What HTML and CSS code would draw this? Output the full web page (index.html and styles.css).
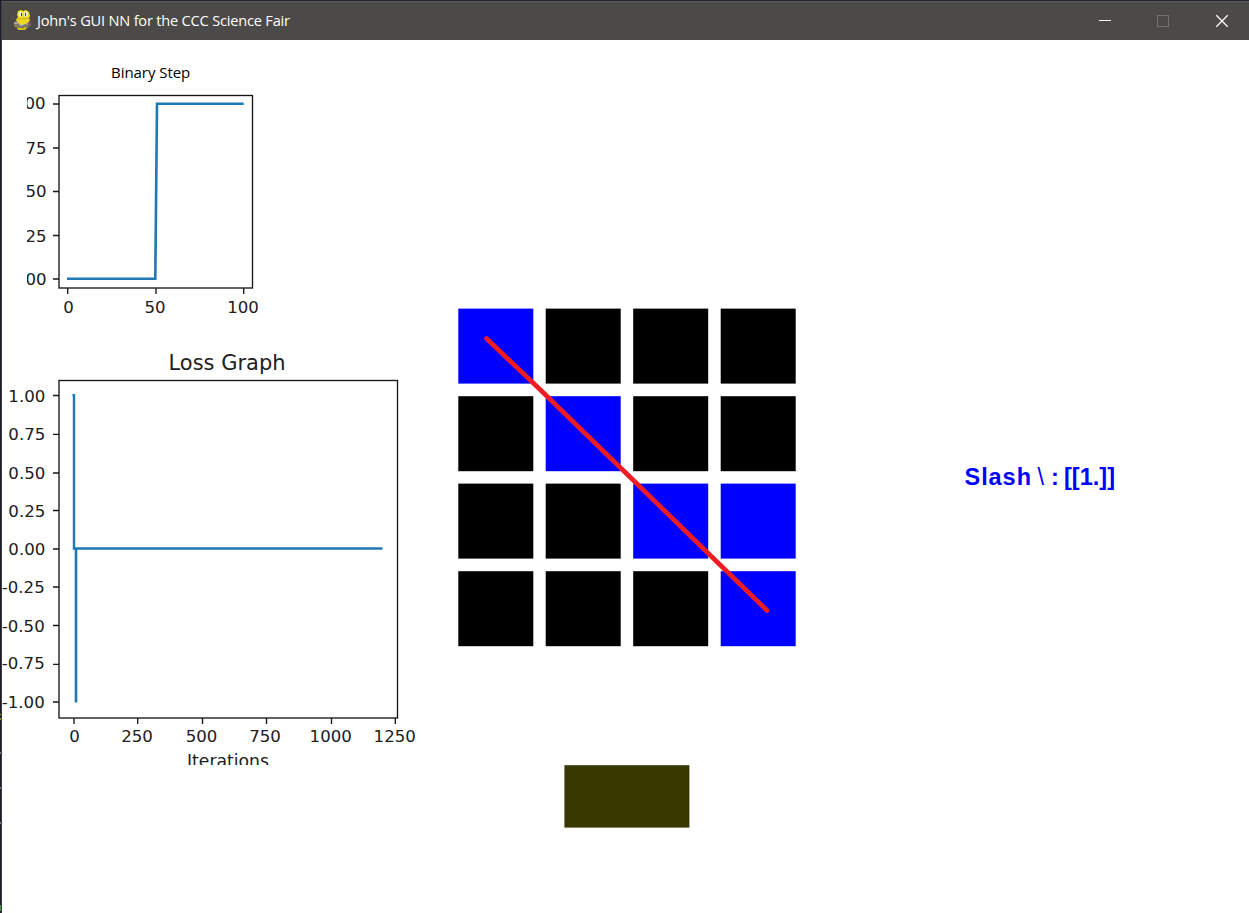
FILE: index.html
```html
<!DOCTYPE html>
<html lang="en">
<head>
<meta charset="utf-8">
<title>John's GUI NN for the CCC Science Fair</title>
<link rel="stylesheet" href="styles.css">
</head>
<body>
<div class="desktop">
  <svg class="edge" width="2" height="913" shape-rendering="crispEdges">
    <rect width="2" height="913" fill="#1e1e2a"/><rect x="1" y="1" width="1" height="912" fill="#3c3b42"/>
    <g><rect y="714" width="1" height="1" fill="#80a526"/><rect y="718" width="1" height="2" fill="#739e20"/><rect y="752" width="1" height="1" fill="#a36545"/><rect y="753" width="1" height="1" fill="#508eaa"/><rect y="787" width="1" height="1" fill="#a36545"/><rect y="788" width="1" height="1" fill="#508eaa"/><rect y="822" width="1" height="1" fill="#a36545"/><rect y="823" width="1" height="1" fill="#508eaa"/><rect y="905" width="1" height="6" fill="#439340"/></g>
  </svg>
  <div class="window">
    <header class="titlebar">
      <svg class="app-icon" width="20" height="22" viewBox="0 0 20 22">
        <path d="M5 15h8l1 3-2 2H5l-1-2z" fill="#d3bd1b"/>
        <path d="M6 17l5 1" stroke="#817515"/>
        <path d="M5 1l3-1 2 1 3-1 3 2 1 4-1 2 1 2-2 3-4 2H7l-3-2-1-3 2-3-1-2z" fill="#edd923"/>
        <path d="M5 9h7l4-1" stroke="#c6ad18" fill="none"/>
        <ellipse cx="7.500" cy="4" rx="2" ry="2.700" fill="#eeeede"/><ellipse cx="12.800" cy="4" rx="2" ry="2.700" fill="#eeeede"/>
        <path d="M8 3h1v3H8zM12 3h1v3h-1z" fill="#444"/>
        <path d="M1 12l3-1 2 3 4 1 3-1 4-2 1 3-3 3-4-1-3 1-5-1-2-2z" fill="#77746d"/>
        <path d="M1 13h4M6 15h4M13 14h2" stroke="#d1d0ca"/>
        <path d="M15 13l1 3" stroke="#983e34"/>
        <path d="M1 16h3" stroke="#c3ac20"/>
      </svg>
      <span class="title">John's GUI NN for the CCC Science Fair</span>
      <svg class="controls" width="177" height="39" viewBox="0 0 177 39">
        <rect x="27" y="19" width="12" height="1" fill="#fff"/>
        <rect x="85.500" y="14.500" width="11" height="11" fill="none" stroke="#747371"/>
        <path d="M144.300 14.300l11.400 11.400m0-11.400l-11.400 11.400" stroke="#fff" stroke-width="1.250"/>
      </svg>
    </header>
    <main class="content">
      <section class="charts">
        <h2 class="step-title"><span>Binary Step</span></h2>
        <svg class="step-chart" width="240" height="230" viewBox="27 90 240 230">
          <g class="ticks"><path d="M53 104h6M53 148h6M53 191.500h6M53 235.500h6M53 279h6M67.700 288v6M156 288v6M243.700 288v6"/></g>
          <rect class="frame" x="59" y="95.500" width="193.500" height="192.500"/>
          <path class="curve" d="M67 278.700H155.300L157 103.800H243.700"/>
          <g class="labels y">
            <text x="45.500" y="109">1.00</text><text x="46.500" y="154">0.75</text><text x="46.500" y="197">0.50</text><text x="46.500" y="242">0.25</text><text x="46.500" y="284.500">0.00</text>
          </g>
          <g class="labels x"><text x="68.500" y="313">0</text><text x="155" y="313">50</text><text x="243" y="313">100</text></g>
        </svg>
        <svg class="loss-chart" width="423" height="425" viewBox="2 340 423 425">
          <text class="loss-title" x="168.500" y="370" textLength="117" lengthAdjust="spacingAndGlyphs">Loss Graph</text>
          <g class="ticks"><path d="M53 395.500h6M53 434.300h6M53 473h6M53 510.500h6M53 549h6M53 587h6M53 625.500h6M53 664.300h6M53 702h6M74 718v6M137.700 718v6M202.500 718v6M266.500 718v6M331.500 718v6M395.300 718v6"/></g>
          <rect class="frame" x="59" y="380.500" width="338.500" height="337.500"/>
          <path class="curve loss" d="M72.500 395.300H74V548.500H382.500"/>
          <path class="curve" d="M76 548.500V702.500"/>
          <g class="labels y">
            <text x="45.300" y="402">1.00</text><text x="45.300" y="439.500">0.75</text><text x="45.300" y="478.500">0.50</text><text x="45.300" y="517">0.25</text><text x="45.300" y="554.500">0.00</text>
            <text x="44.700" y="593">-0.25</text><text x="44.700" y="632">-0.50</text><text x="44.700" y="669.300">-0.75</text><text x="44.700" y="708">-1.00</text>
          </g>
          <g class="labels x"><text x="74.500" y="742">0</text><text x="137" y="742">250</text><text x="201.500" y="742">500</text><text x="265" y="742">750</text><text x="330.700" y="742">1000</text><text x="394.700" y="742">1250</text></g>
          <text class="axis" x="187" y="767" textLength="82" lengthAdjust="spacingAndGlyphs">Iterations</text>
        </svg>
      </section>
      <section class="board">
        <svg width="350" height="350" viewBox="452 302 350 350">
          <g fill="#000">
            <rect x="545.700" y="308.600" width="75" height="75"/><rect x="633.200" y="308.600" width="75" height="75"/><rect x="720.700" y="308.600" width="75" height="75"/>
            <rect x="458.300" y="396.200" width="75" height="75"/><rect x="633.200" y="396.200" width="75" height="75"/><rect x="720.700" y="396.200" width="75" height="75"/>
            <rect x="458.300" y="483.600" width="75" height="75"/><rect x="545.700" y="483.600" width="75" height="75"/>
            <rect x="458.300" y="571.200" width="75" height="75"/><rect x="545.700" y="571.200" width="75" height="75"/><rect x="633.200" y="571.200" width="75" height="75"/>
          </g>
          <g fill="#00f">
            <rect x="458.300" y="308.600" width="75" height="75"/><rect x="545.700" y="396.200" width="75" height="75"/><rect x="633.200" y="483.600" width="75" height="75"/><rect x="720.700" y="483.600" width="75" height="75"/><rect x="720.700" y="571.200" width="75" height="75"/>
          </g>
          <path d="M486.500 338.500L539 388.500L630 477L712 557L767 610.500" fill="none" stroke="#ed1c24" stroke-width="4.700" stroke-linecap="round" stroke-linejoin="round"/>
        </svg>
        <svg class="action" width="127" height="64" viewBox="563 764 127 64"><rect x="564.400" y="765.200" width="125" height="62.400" fill="#383800"/></svg>
      </section>
      <section class="result">
        <svg width="160" height="36" viewBox="960 460 160 36">
          <text x="964.500" y="485" textLength="66.500" lengthAdjust="spacing">Slash</text>
          <text class="thin" x="1037.500" y="485">\</text>
          <text x="1051" y="485">:</text>
          <text x="1064" y="485" textLength="51" lengthAdjust="spacing">[[1.]]</text>
        </svg>
      </section>
    </main>
  </div>
</div>
</body>
</html>
```
FILE: styles.css
```css
* { box-sizing: border-box; }
body { margin: 0; background: #fff; overflow: hidden; }
svg { display: block; flex: none; }
.desktop { display: flex; width: 1249px; height: 913px; }
.edge { width: 2px; }
.window { width: 1247px; border-top: 1px solid #20222d; }
.titlebar { display: flex; height: 39px; background: #4c4a48; border-top: 1px solid #5b5a5a; padding-left: 11px; }
.app-icon { margin-top: 8px; }
.title { flex: 1; margin-left: 4px; color: #fff; font: 14.6px/37px "Open Sans", "Noto Sans", sans-serif; letter-spacing: -0.2px; white-space: nowrap; }
.controls { margin-top: -1px; }
.content { display: grid; grid-template-columns: 450px 350px 1fr; height: 873px; }
.charts { padding-top: 21px; }
.step-title { margin: 0; height: 29px; padding-left: 109px; color: #000; font: 15px/22px "Open Sans", "Noto Sans", sans-serif; letter-spacing: -0.05px; }
.step-chart { margin-left: 25px; }
.loss-chart { margin-top: 20px; }
.frame { fill: none; stroke: #171717; stroke-width: 1.35px; }
.ticks { stroke: #171717; stroke-width: 1.35px; }
.curve { fill: none; stroke: #1f77b4; stroke-width: 2.6px; }
.curve.loss { stroke-width: 2.4px; }
.labels, .axis { fill: #202020; font: 16.6px "DejaVu Sans", sans-serif; }
.axis { font-size: 17.5px; }
.labels.y { text-anchor: end; }
.labels.x { text-anchor: middle; }
.loss-title { fill: #202020; font: 22px "DejaVu Sans", sans-serif; }
.board { display: flex; flex-direction: column; padding-top: 262px; }
.action { margin: 112px 0 0 111px; }
.result { padding: 420px 0 0 158px; }
.result text { fill: #00f; font: bold 23.5px "Liberation Sans", Arial, sans-serif; }
.result .thin { font-weight: normal; }
```
